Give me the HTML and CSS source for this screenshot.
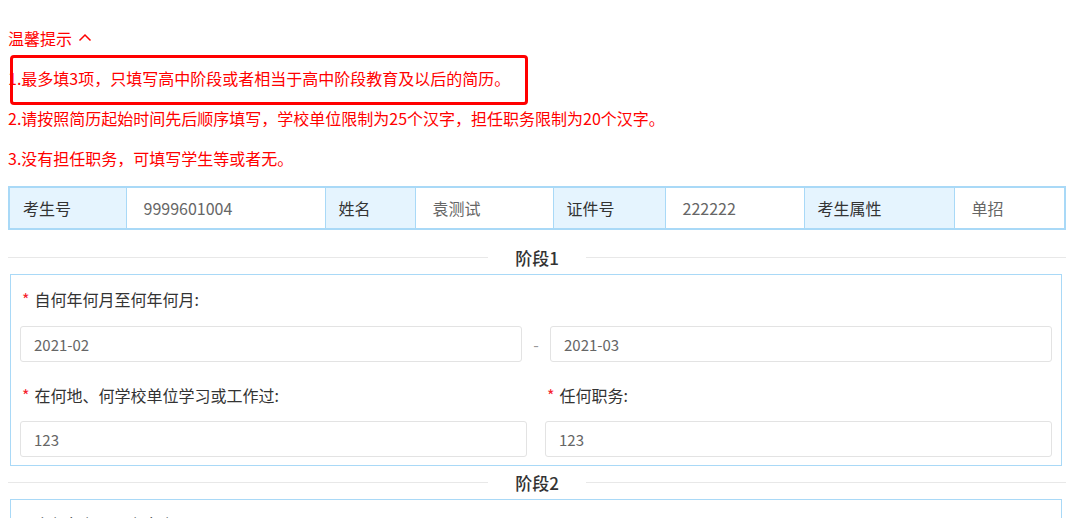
FILE: index.html
```html
<!DOCTYPE html>
<html lang="zh-CN">
<head>
    <meta charset="UTF-8">
    <title>学习工作简历</title>
    <link rel="stylesheet" href="styles.css">
</head>
<body>
<div class="Page">
    <div class="Tips">
        <div class="Tips-title">
            温馨提示
            <svg class="Tips-arrow" width="14" height="9" viewBox="0 0 14 9">
                <path d="M1.5 7.5 L7 2 L12.5 7.5" fill="none" stroke="#f00" stroke-width="1.5"/>
            </svg>
        </div>
        <p class="Tips-line Tips-line--marked">1.最多填3项，只填写高中阶段或者相当于高中阶段教育及以后的简历。</p>
        <p class="Tips-line">2.请按照简历起始时间先后顺序填写，学校单位限制为25个汉字，担任职务限制为20个汉字。</p>
        <p class="Tips-line">3.没有担任职务，可填写学生等或者无。</p>
    </div>

    <table class="Info">
        <colgroup>
            <col style="width:117px"><col style="width:199px">
            <col style="width:90px"><col style="width:138px">
            <col style="width:112px"><col style="width:139px">
            <col style="width:150px"><col>
        </colgroup>
        <tr>
            <th>考生号</th><td>9999601004</td>
            <th>姓名</th><td>袁测试</td>
            <th>证件号</th><td>222222</td>
            <th>考生属性</th><td>单招</td>
        </tr>
    </table>

    <div class="Divider"><span>阶段1</span></div>
    <div class="Stage">
        <div class="Field-label"><i>*</i>自何年何月至何年何月:</div>
        <div class="Range">
            <input class="Input" value="2021-02" readonly>
            <span class="Range-sep">-</span>
            <input class="Input" value="2021-03" readonly>
        </div>
        <div class="Pair">
            <div>
                <div class="Field-label"><i>*</i>在何地、何学校单位学习或工作过:</div>
                <input class="Input" value="123" readonly>
            </div>
            <div>
                <div class="Field-label"><i>*</i>任何职务:</div>
                <input class="Input" value="123" readonly>
            </div>
        </div>
    </div>

    <div class="Divider"><span>阶段2</span></div>
    <div class="Stage">
        <div class="Field-label"><i>*</i>自何年何月至何年何月:</div>
        <div class="Range">
            <input class="Input" value="" readonly>
            <span class="Range-sep">-</span>
            <input class="Input" value="" readonly>
        </div>
    </div>
</div>
</body>
</html>
```

FILE: styles.css
```css
html, body {
    margin: 0;
    overflow: hidden;
    background: #fff;
}
body {
    font-family: "Noto Sans CJK SC", "Noto Sans", sans-serif;
    font-size: 16px;
    color: #333;
}
.Page {
    width: 1058px;
    padding: 18px 0 0 8px;
}
.Tips {
    color: #f00;
    font-size: 16px;
}
.Tips-title {
    line-height: 40px;
    display: flex;
    align-items: center;
    gap: 6px;
}
.Tips-arrow {
    margin-top: -2px;
}
.Tips-line {
    margin: 0;
    line-height: 40px;
    white-space: nowrap;
}
.Tips-line--marked {
    position: relative;
}
/* red annotation frame drawn over the first tip */
.Tips-line--marked::after {
    content: '';
    position: absolute;
    left: 2px;
    top: -3px;
    width: 512px;
    height: 44px;
    border: 3px solid #f00;
    border-radius: 4px;
}

.Info {
    margin-top: 8px;
    width: 1058px;
    border-collapse: collapse;
    table-layout: fixed;
    border: 2px solid #a9d9f7;
}
.Info th, .Info td {
    height: 40px;
    padding: 0 13px;
    border: 1px solid #a9d9f7;
    text-align: left;
    font-weight: normal;
    font-size: 16px;
    white-space: nowrap;
}
.Info th {
    background: #e5f4fe;
    color: #333;
}
.Info td {
    color: #666;
    padding-left: 17px;
}

.Divider {
    margin-top: 11px;
    height: 32px;
    display: flex;
    align-items: center;
}
.Divider::before, .Divider::after {
    content: '';
    flex: 1;
    border-top: 1px solid #e8e8e8;
}
.Divider span {
    padding: 0 27px;
    font-size: 17px;
    font-weight: 500;
    color: #333;
}
.Divider + .Stage {
    margin-top: 1px;
}
.Stage + .Divider {
    margin-top: 0;
}

.Stage {
    margin: 0 4px 0 2px;
    border: 1px solid #a9d9f7;
    padding: 14px 9px 8px;
}
.Field-label {
    line-height: 20px;
    font-size: 16px;
    color: #333;
    margin-bottom: 17px;
}
.Field-label i {
    font-style: normal;
    color: #f5222d;
    margin: 0 5px 0 2px;
}
.Range {
    display: grid;
    grid-template-columns: 1fr 28px 1fr;
    align-items: center;
    margin-bottom: 23px;
}
.Range-sep {
    text-align: center;
    color: #999;
}
.Pair {
    display: grid;
    grid-template-columns: 1fr 1fr;
    gap: 18px;
}
.Pair .Field-label {
    margin-bottom: 16px;
}
.Input {
    display: block;
    box-sizing: border-box;
    width: 100%;
    height: 36px;
    padding: 0 13px;
    border: 1px solid #e3e3e3;
    border-radius: 3px;
    font-family: inherit;
    font-size: 15px;
    color: #666;
    background: #fff;
    outline: none;
}
```
